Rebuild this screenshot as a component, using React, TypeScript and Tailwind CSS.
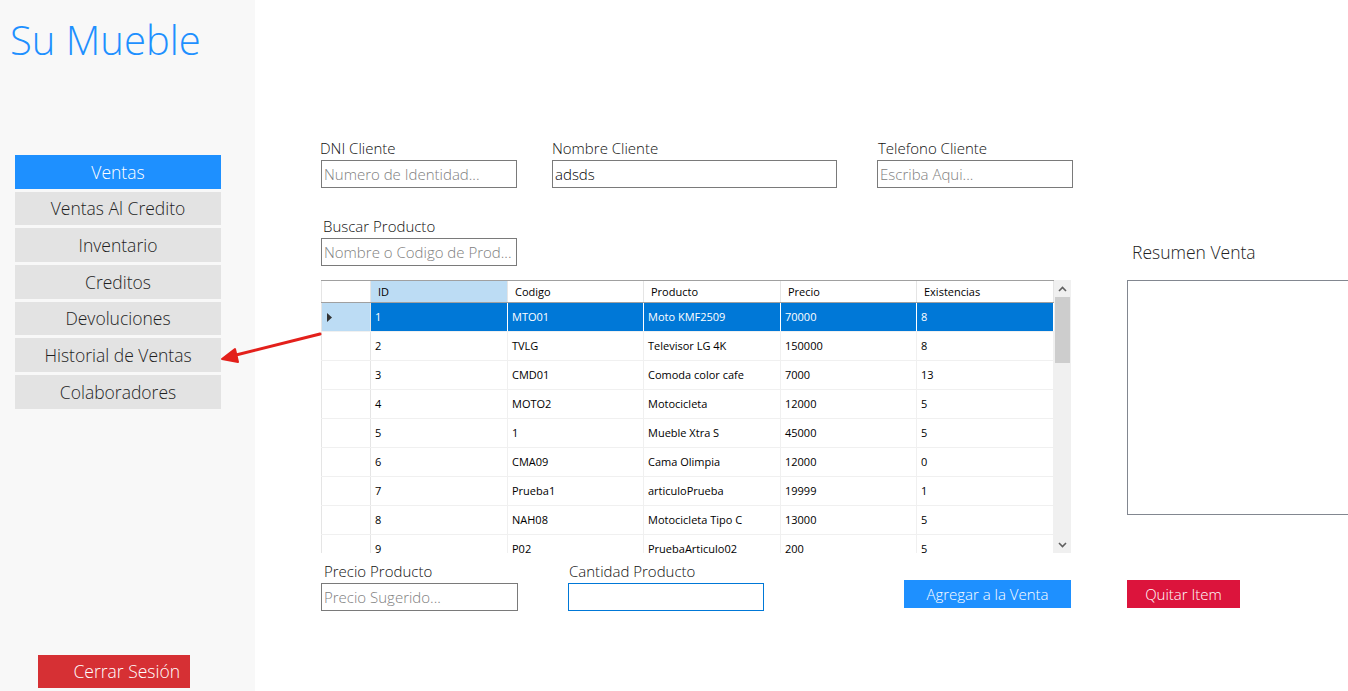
import React from "react";

const rows = [
  ["1", "MTO01", "Moto KMF2509", "70000", "8"],
  ["2", "TVLG", "Televisor LG 4K", "150000", "8"],
  ["3", "CMD01", "Comoda color cafe", "7000", "13"],
  ["4", "MOTO2", "Motocicleta", "12000", "5"],
  ["5", "1", "Mueble Xtra S", "45000", "5"],
  ["6", "CMA09", "Cama Olimpia", "12000", "0"],
  ["7", "Prueba1", "articuloPrueba", "19999", "1"],
  ["8", "NAH08", "Motocicleta Tipo C", "13000", "5"],
  ["9", "P02", "PruebaArticulo02", "200", "5"],
];

const colW = ["w-[137px]", "w-[136px]", "w-[137px]", "w-[136px]", "w-[137px]"];
const headers = ["ID", "Codigo", "Producto", "Precio", "Existencias"];

function Field({
  label,
  placeholder,
  value,
  width,
  focused,
  labelOffset,
}: {
  label: string;
  placeholder?: string;
  value?: string;
  width: string;
  focused?: boolean;
  labelOffset?: string;
}) {
  return (
    <div className="flex flex-col">
      <div className={`h-[20px] leading-[20px] text-[15px] font-light text-[#111] ${labelOffset ?? ""}`}>{label}</div>
      <input
        readOnly
        defaultValue={value}
        placeholder={placeholder}
        className={`mt-[2px] ml-[1px] h-[28px] ${width} border ${
          focused ? "border-[#0078d7]" : "border-[#7a7a7a]"
        } bg-white px-[2px] text-[15px] font-light text-black placeholder:text-[#808080] outline-none`}
      />
    </div>
  );
}

export default function App() {
  return (
    <div className="relative flex h-[691px] w-[1348px] overflow-hidden bg-white font-['Open_Sans',sans-serif]">
      <aside className="flex h-full w-[255px] shrink-0 flex-col bg-[#f8f8f8]">
        <h1 className="ml-[10px] mt-[15px] h-[50px] text-[40px] font-light leading-[50px] text-[#1e90ff]">Su Mueble</h1>
        <nav className="ml-[15px] mt-[90px] flex w-[206px] flex-col gap-[3px] text-[17.5px] font-light">
          <div className="flex h-[33.67px] items-center justify-center bg-[#1e90ff] text-white">Ventas</div>
          {["Ventas Al Credito", "Inventario", "Creditos", "Devoluciones", "Historial de Ventas", "Colaboradores"].map((t) => (
            <div key={t} className="flex h-[33.67px] items-center justify-center bg-[#e3e3e3] text-[#1f1f1f]">
              {t}
            </div>
          ))}
        </nav>
        <div className="mt-auto mb-[3px] ml-[38px] flex h-[33px] w-[152px] items-center justify-end bg-[#d63034] pr-[10px] text-[17.5px] font-light text-white">
          Cerrar Sesión
        </div>
      </aside>

      <main className="flex-1 pl-[65px] pt-[138px]">
        <div className="flex items-start">
          <div className="w-[231px] shrink-0">
            <Field label="DNI Cliente" placeholder="Numero de Identidad..." width="w-[196px]" />
          </div>
          <div className="w-[325px] shrink-0">
            <Field label="Nombre Cliente" value="adsds" width="w-[285px]" labelOffset="ml-[1px]" />
          </div>
          <div>
            <Field label="Telefono Cliente" placeholder="Escriba Aqui..." width="w-[196px]" labelOffset="ml-[2px]" />
          </div>
        </div>

        <div className="mt-[28px] flex items-start">
          <div className="flex w-[752px] shrink-0 flex-col">
            <Field label="Buscar Producto" placeholder="Nombre o Codigo de Prod..." width="w-[196px]" labelOffset="ml-[3px]" />

            <div className="ml-[1px] mt-[14px] flex h-[273px] w-[750px] overflow-hidden text-[11px] text-black">
              <div className="flex w-[733px] shrink-0 flex-col overflow-hidden">
                <div className="flex h-[23px] shrink-0 border-y border-t-[#a0a0a0] border-b-[#a0a0a0]">
                  <div className="w-[50px] border-r border-l border-[#e5e5e5] bg-white" />
                  {headers.map((h, i) => (
                    <div
                      key={h}
                      className={`${colW[i]} flex items-center border-r border-[#e5e5e5] pl-[7px] pt-[1px] ${
                        i === 0 ? "bg-[#bcdcf4]" : "bg-white"
                      }`}
                    >
                      {h}
                    </div>
                  ))}
                </div>
                {rows.map((r, ri) => {
                  const sel = ri === 0;
                  return (
                    <div key={ri} className="flex h-[29px] shrink-0 border-b border-[#f0f0f0]">
                      <div
                        className={`flex w-[50px] items-center border-r border-l border-[#e5e5e5] pl-[5px] ${
                          sel ? "bg-[#bcdcf4]" : "bg-white"
                        }`}
                      >
                        {sel && (
                          <svg width="6" height="9" viewBox="0 0 6 9">
                            <path d="M0 0 L5 4.5 L0 9 Z" fill="#333" />
                          </svg>
                        )}
                      </div>
                      {r.map((c, ci) => (
                        <div
                          key={ci}
                          className={`${colW[ci]} flex items-center border-r pl-[4px] pt-[1px] ${
                            sel ? "border-white bg-[#0078d7] text-white" : "border-[#f0f0f0] bg-white"
                          }`}
                        >
                          {c}
                        </div>
                      ))}
                    </div>
                  );
                })}
              </div>
              <div className="flex w-[17px] shrink-0 flex-col bg-[#f0f0f0]">
                <div className="flex h-[17px] items-center justify-center">
                  <svg width="9" height="6" viewBox="0 0 9 6">
                    <path d="M1 5 L4.5 1.5 L8 5" stroke="#606060" strokeWidth="1.6" fill="none" />
                  </svg>
                </div>
                <div className="mx-[1px] h-[66px] bg-[#cdcdcd]" />
                <div className="flex-1" />
                <div className="flex h-[17px] items-center justify-center">
                  <svg width="9" height="6" viewBox="0 0 9 6">
                    <path d="M1 1 L4.5 4.5 L8 1" stroke="#606060" strokeWidth="1.6" fill="none" />
                  </svg>
                </div>
              </div>
            </div>

            <div className="mt-[8px] flex items-start">
              <div className="w-[247px] shrink-0">
                <Field label="Precio Producto" placeholder="Precio Sugerido..." width="w-[197px]" labelOffset="ml-[4px]" />
              </div>
              <div className="w-[337px] shrink-0">
                <Field label="Cantidad Producto" width="w-[196px]" focused labelOffset="ml-[2px]" />
              </div>
              <div className="mt-[19px] flex h-[28px] w-[167px] items-center justify-center bg-[#1e90ff] text-[15px] font-light text-white">
                Agregar a la Venta
              </div>
            </div>
          </div>

          <div className="ml-[55px] flex shrink-0 flex-col">
            <div className="ml-[5px] mt-[24px] h-[24px] text-[17.5px] font-light leading-[24px] text-[#222]">Resumen Venta</div>
            <div className="mt-[16px] h-[235px] w-[240px] border border-[#828790] bg-white" />
            <div className="mt-[65px] flex h-[28px] w-[113px] items-center justify-center bg-[#dc143c] text-[15px] font-light text-white">
              Quitar Item
            </div>
          </div>
        </div>
      </main>

      <svg className="pointer-events-none absolute left-0 top-0" width="1348" height="691">
        <line x1="320" y1="334" x2="232" y2="356" stroke="#e3201b" strokeWidth="3" strokeLinecap="round" />
        <path d="M222 359 L235 349 L238 362 Z" fill="#e3201b" stroke="#e3201b" strokeWidth="2" strokeLinejoin="round" />
      </svg>
    </div>
  );
}
